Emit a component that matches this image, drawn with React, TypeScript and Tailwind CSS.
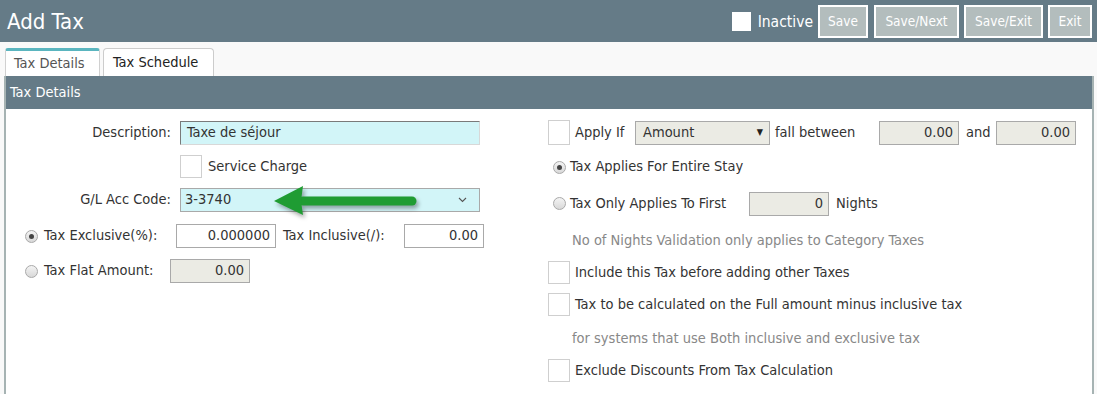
import { ReactNode } from "react";

function Radio({ checked }: { checked?: boolean }) {
  return (
    <span className="w-[13px] h-[13px] rounded-full border border-[#a9a9a9] bg-gradient-to-b from-[#f4f4f4] to-[#d8d8d8] flex items-center justify-center shrink-0">
      {checked && <span className="w-[5px] h-[5px] rounded-full bg-[#444]" />}
    </span>
  );
}

function Box({ className = "" }: { className?: string }) {
  return <span className={`w-[22px] h-[23px] border border-[#cfcfcf] bg-white shrink-0 ${className}`} />;
}

function NumInput({ value, w, disabled }: { value: string; w: string; disabled?: boolean }) {
  return (
    <span
      className={`${w} h-[24px] shrink-0 border border-[#a9a9a9] flex items-center justify-end pr-[5px] text-[#333] ${
        disabled ? "bg-[#ebebe4]" : "bg-white"
      }`}
    >
      {value}
    </span>
  );
}

function Row({ children, className = "" }: { children: ReactNode; className?: string }) {
  return <div className={`flex items-center whitespace-nowrap ${className}`}>{children}</div>;
}

function GreenArrow() {
  return (
    <svg
      className="absolute left-[89px] top-[-5px] drop-shadow-[2px_3px_2px_rgba(0,0,0,0.35)]"
      width="152"
      height="36"
      viewBox="0 0 152 36"
    >
      <path d="M33 17H142" stroke="#1f9c33" strokeWidth="9" strokeLinecap="round" />
      <path d="M4 17L33 2L31 17L33 31Z" fill="#1f9c33" />
    </svg>
  );
}

const buttons = [
  { label: "Save", w: "w-[50px] mr-[1px]" },
  { label: "Save/Next", w: "w-[85px]" },
  { label: "Save/Exit", w: "w-[79px]" },
  { label: "Exit", w: "w-[44px]" },
];

export default function App() {
  return (
    <div className="w-[1097px] h-[394px] overflow-hidden bg-[#f9f9f9] font-['DejaVu_Sans_Condensed','DejaVu_Sans',sans-serif] text-[14.5px] text-[#333]">
      <header className="h-[42px] bg-[#657b87] flex items-center justify-between pl-[7px] pr-[5px]">
        <h1 className="text-[22px] text-white">Add Tax</h1>
        <div className="flex items-center">
          <span className="w-[19px] h-[19px] bg-white" />
          <span className="ml-[7px] mt-[3px] text-[15.5px] text-white">Inactive</span>
          <div className="flex items-center gap-[5px] ml-[5px]">
            {buttons.map((b) => (
              <button
                key={b.label}
                className={`${b.w} h-[33px] border-2 border-white bg-[#b3bdbd] text-white text-[13.5px]`}
              >
                {b.label}
              </button>
            ))}
          </div>
        </div>
      </header>

      <div className="px-[4px] pt-[6px]">
        <div className="flex items-end gap-[3px] pl-[1px]">
          <div className="w-[95px] h-[28px] bg-white border-x border-[#d0d0d0] border-t-[3px] border-t-[#5ab5bf] rounded-t-[3px] flex items-center pl-[8px] text-[#555]">
            Tax Details
          </div>
          <div className="w-[111px] h-[28px] bg-white border border-b-0 border-[#cccccc] rounded-t-[4px] flex items-center pl-[9px] text-[#222]">
            Tax Schedule
          </div>
        </div>

        <div className="w-[1090px] border-x-2 border-[#a6b3b3] bg-white h-[320px]">
          <div className="h-[33px] bg-[#657b87] flex items-center pl-[4px] text-white">Tax Details</div>

          <div className="flex">
            {/* left column */}
            <div className="w-[542px] pt-[11px]">
              <Row className="h-[25px]">
                <span className="w-[165px] text-right">Description:</span>
                <span className="ml-[9px] w-[300px] h-[24px] bg-[#d2f5f8] border border-[#d8d8d8] border-t-[#7a7a7a] border-l-[#7a7a7a] flex items-center pl-[6px]">
                  Taxe de séjour
                </span>
              </Row>
              <Row className="h-[23px] mt-[10px]">
                <Box className="ml-[174px]" />
                <span className="ml-[6px]">Service Charge</span>
              </Row>
              <Row className="h-[24px] mt-[10px]">
                <span className="w-[165px] text-right">G/L Acc Code:</span>
                <span className="relative ml-[9px] w-[300px] h-[24px] bg-[#d2f5f8] border border-[#a9a9a9] flex items-center justify-between pl-[4px] pr-[12px]">
                  3-3740
                  <svg width="9" height="6" viewBox="0 0 9 6">
                    <path d="M1 1L4.5 4.5L8 1" stroke="#555" strokeWidth="1.1" fill="none" />
                  </svg>
                  <GreenArrow />
                </span>
              </Row>
              <Row className="h-[24px] mt-[12px] pl-[19px]">
                <Radio checked />
                <span className="ml-[6px] w-[132px]">Tax Exclusive(%):</span>
                <NumInput value="0.000000" w="w-[100px]" />
                <span className="ml-[7px] w-[121px]">Tax Inclusive(/):</span>
                <NumInput value="0.00" w="w-[80px]" />
              </Row>
              <Row className="h-[24px] mt-[11px] pl-[19px]">
                <Radio />
                <span className="ml-[6px] w-[126px]">Tax Flat Amount:</span>
                <NumInput value="0.00" w="w-[80px]" disabled />
              </Row>
            </div>

            {/* right column */}
            <div className="flex-1 pt-[11px]">
              <Row className="h-[25px]">
                <Box className="h-[25px]" />
                <span className="ml-[5px] w-[60px]">Apply If</span>
                <span className="w-[135px] h-[24px] bg-[#ebebe4] border border-[#a9a9a9] flex items-center justify-between pl-[7px] pr-[6px]">
                  Amount
                  <span className="text-[9px] text-[#222]">▼</span>
                </span>
                <span className="ml-[5px] w-[104px]">fall between</span>
                <NumInput value="0.00" w="w-[80px]" disabled />
                <span className="ml-[7px] w-[30px]">and</span>
                <NumInput value="0.00" w="w-[80px]" disabled />
              </Row>
              <Row className="h-[22px] mt-[11px] pl-[5px]">
                <Radio checked />
                <span className="ml-[4px]">Tax Applies For Entire Stay</span>
              </Row>
              <Row className="h-[25px] mt-[13px] pl-[5px]">
                <Radio />
                <span className="ml-[4px] w-[179px]">Tax Only Applies To First</span>
                <NumInput value="0" w="w-[80px]" disabled />
                <span className="ml-[7px]">Nights</span>
              </Row>
              <Row className="h-[22px] mt-[14px] pl-[24px] text-[#888]">
                No of Nights Validation only applies to Category Taxes
              </Row>
              <Row className="h-[23px] mt-[9px]">
                <Box />
                <span className="ml-[5px]">Include this Tax before adding other Taxes</span>
              </Row>
              <Row className="h-[23px] mt-[9px]">
                <Box />
                <span className="ml-[5px]">Tax to be calculated on the Full amount minus inclusive tax</span>
              </Row>
              <Row className="h-[22px] mt-[12px] pl-[24px] text-[#888]">
                for systems that use Both inclusive and exclusive tax
              </Row>
              <Row className="h-[23px] mt-[9px]">
                <Box />
                <span className="ml-[5px]">Exclude Discounts From Tax Calculation</span>
              </Row>
            </div>
          </div>
        </div>
      </div>
    </div>
  );
}
